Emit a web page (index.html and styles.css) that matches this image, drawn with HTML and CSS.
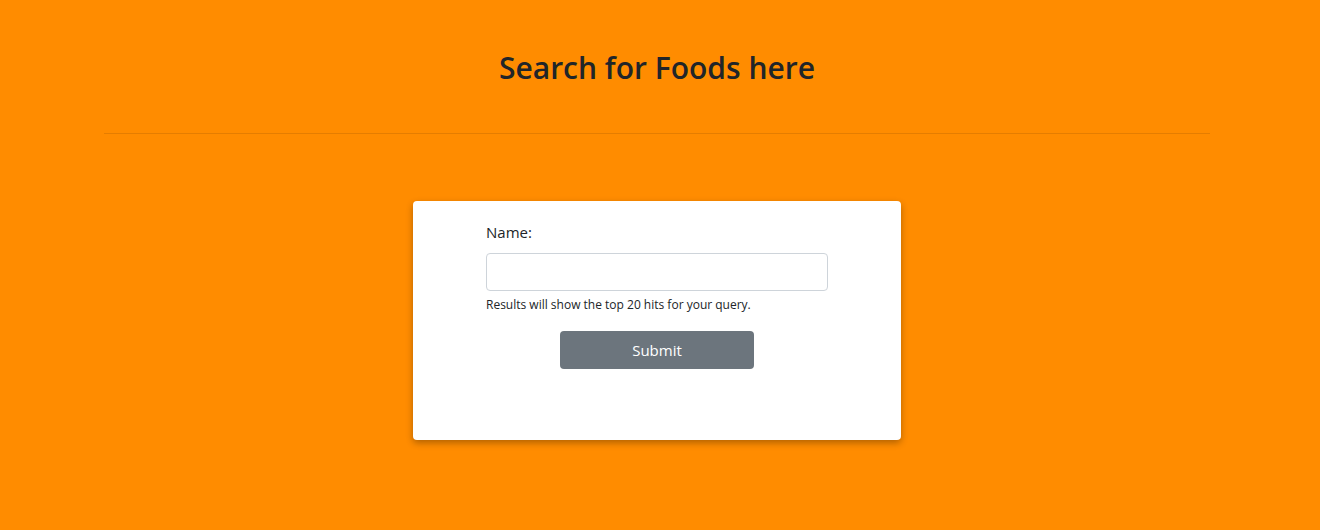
FILE: index.html
```html
<!DOCTYPE html>
<html lang="en">
<head>
<meta charset="utf-8">
<title>Search for Foods</title>
<link rel="stylesheet" href="styles.css">
</head>
<body>
<div class="page">
  <header class="header">
    <h2 class="title">Search for Foods here</h2>
  </header>
  <hr class="divider">
  <main class="main">
    <div class="card">
      <form class="form">
        <label class="label" for="name">Name:</label>
        <input class="input" id="name" type="text">
        <small class="help">Results will show the top 20 hits for your query.</small>
        <div class="actions">
          <button class="btn" type="button">Submit</button>
        </div>
      </form>
    </div>
  </main>
</div>
</body>
</html>
```
FILE: styles.css
```css
html, body {
  margin: 0;
  padding: 0;
  background: #ff8c00;
  height: 100%;
}
body {
  font-family: "Open Sans", "Noto Sans", sans-serif;
  color: #212529;
  padding-right: 6px;
}
.page {
  width: 1106px;
  margin: 0 auto;
}
.header {
  padding-top: 49px;
  display: flex;
  justify-content: center;
}
.title {
  margin: 0;
  font-size: 30px;
  font-weight: 600;
  line-height: 38px;
  color: #212529;
}
.divider {
  margin: 46px 0 0;
  border: 0;
  border-top: 1px solid rgba(0, 0, 0, 0.1);
}
.main {
  display: flex;
  justify-content: center;
  padding-top: 67px;
}
.card {
  width: 488px;
  height: 239px;
  background: #fff;
  border-radius: 4px;
  box-shadow: 0 3px 7px rgba(0, 0, 0, 0.3);
  display: flex;
  justify-content: center;
  box-sizing: border-box;
  padding-top: 19px;
}
.form {
  width: 342px;
  display: flex;
  flex-direction: column;
}
.label {
  font-size: 15px;
  line-height: 24px;
  margin-bottom: 9px;
}
.input {
  box-sizing: border-box;
  height: 38px;
  width: 100%;
  border: 1px solid #ced4da;
  border-radius: 4px;
  margin: 0;
  padding: 6px 12px;
  font: inherit;
}
.help {
  font-size: 12px;
  line-height: 18px;
  margin-top: 5px;
}
.actions {
  display: flex;
  justify-content: center;
  margin-top: 17px;
}
.btn {
  width: 194px;
  height: 38px;
  border: 0;
  border-radius: 4px;
  background: #6c757d;
  color: #fff;
  font-family: inherit;
  font-size: 15px;
  cursor: pointer;
}
```
